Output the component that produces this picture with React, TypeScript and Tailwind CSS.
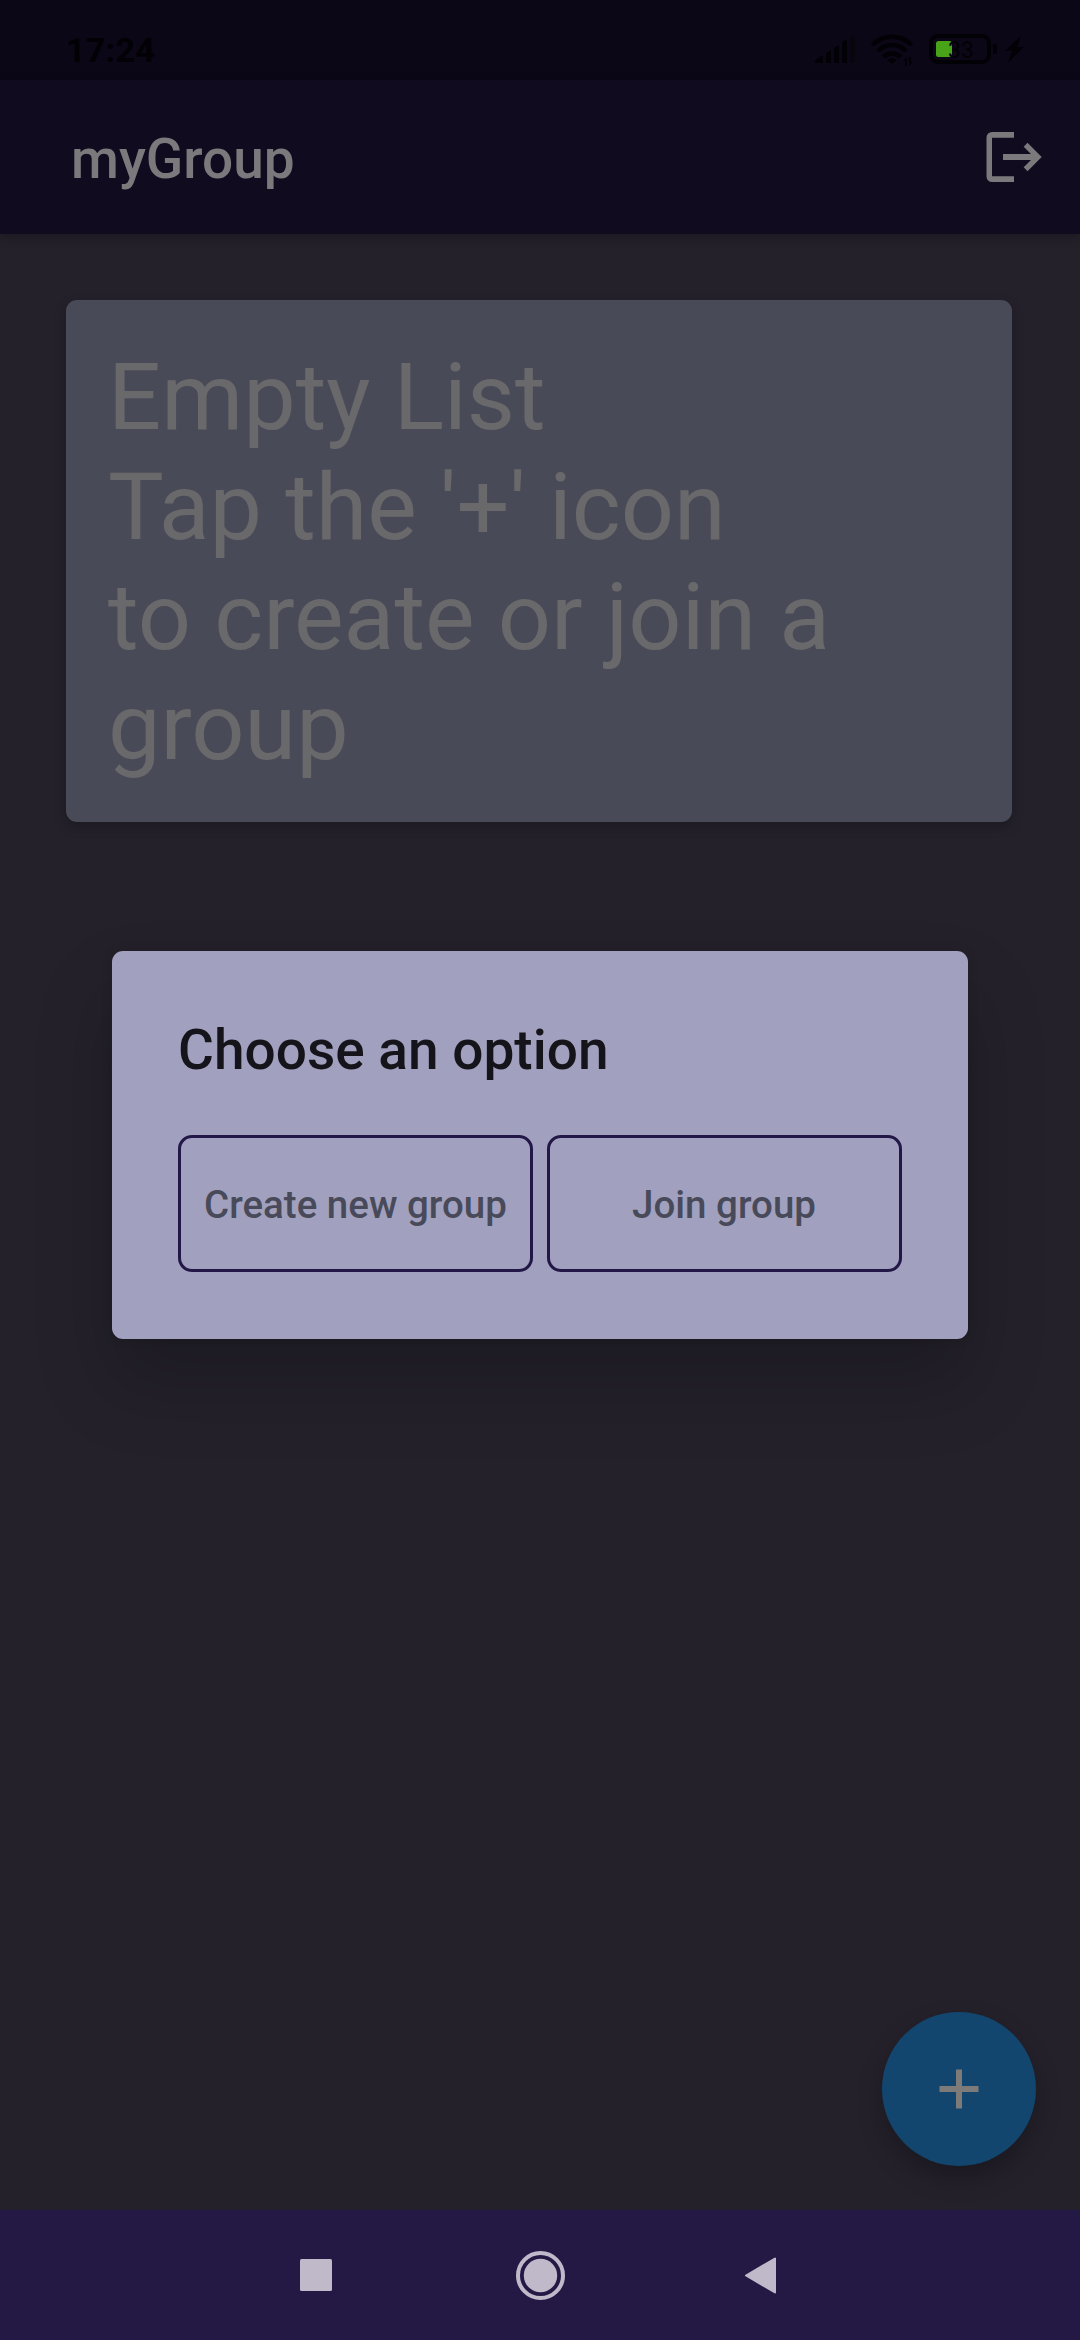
import React from "react";

function StatusIcons() {
  return (
    <svg className="h-20 w-[230px]" viewBox="810 0 230 80">
      <g fill="#020105">
        <path d="M815 63v-2.500l8-5.500v8zM826 63V53l5-3v13zM834 63V48l5-3v18zM842 63V42l5-3v24z" />
        <path d="M850 63V37l5-2v28z" fill="#08050f" />
        <path d="M892 64l-4.500-4a7 7 0 0 1 9 0z" />
      </g>
      <g fill="none" stroke="#020105" strokeWidth="4.500">
        <path d="M872.500 45a27 27 0 0 1 39 0" />
        <path d="M878 51a19.500 19.500 0 0 1 28 0" />
        <path d="M883.500 57a12 12 0 0 1 17 0" />
      </g>
      <path d="M903 61l4-4v9h-2v-5zM909 57v9l4-4h-2v-5z" fill="#020105" />
      <rect x="931" y="36" width="58" height="26" rx="7" fill="none" stroke="#020105" strokeWidth="4" />
      <path d="M993 44h1a3 3 0 0 1 3 3v4a3 3 0 0 1-3 3h-1z" fill="#020105" />
      <rect x="936" y="41" width="16" height="16" rx="2.500" fill="#49a319" />
      <text x="948" y="58" fontSize="23" fontFamily="Roboto" fill="#020105">33</text>
      <path d="M1021 36l-16 15h7l-4 12 16-16h-7z" fill="#020105" />
    </svg>
  );
}

function LogoutIcon() {
  return (
    <svg className="h-[52px] w-[58px]" viewBox="985 131 58 52" fill="#7b797c">
      <path d="M1014 132h-22a5.500 5.500 0 0 0-5.500 5.500v39a5.500 5.500 0 0 0 5.500 5.500h22v-5.750h-22v-38.500h22z" />
      <path d="M1003 154v6h28l-7.300 7.300 3.800 3.900 14.200-14.200-14.200-14.200-3.800 3.900 7.300 7.300z" />
    </svg>
  );
}

function OptionButton({ children }: { children: React.ReactNode }) {
  return (
    <button className="flex h-[137px] w-[355px] items-center justify-center rounded-[14px] border-3 border-[#221747] pt-0.5 text-[38.5px] font-medium text-[#494a59]">
      {children}
    </button>
  );
}

export default function App() {
  return (
    <div className="relative flex h-[2340px] w-[1080px] flex-col overflow-hidden bg-[#24212b] font-['Roboto',sans-serif]">
      <div className="flex h-20 shrink-0 items-center justify-between bg-[#0b0716] pr-10 pl-[66px]">
        <span className="pt-5 text-[34px] leading-none font-bold tracking-[0.3px] text-[#020105]">17:24</span>
        <StatusIcons />
      </div>
      <header className="flex h-[154px] shrink-0 items-center justify-between bg-[#100b1f] pr-[37px] pl-[71px] shadow-[0_4px_10px_rgba(0,0,0,0.25)]">
        <h1 className="pt-1 text-[55px] leading-none font-medium text-[#7b797c]">myGroup</h1>
        <LogoutIcon />
      </header>

      <main className="flex flex-1 flex-col px-[66px] pt-[66px]">
        <section className="h-[522px] w-[946px] rounded-[11px] bg-[#494a57] px-[42px] pt-[42px] shadow-[0_5px_12px_rgba(0,0,0,0.25)]">
          <p className="text-[93.5px] leading-[110px] text-[#69686b]">
            Empty List<br />Tap the '+' icon<br />to create or join a<br />group
          </p>
        </section>
      </main>

      <button className="absolute top-[2012px] left-[882px] flex h-[154px] w-[154px] items-center justify-center rounded-full bg-[#12466f] shadow-[0_12px_24px_rgba(0,0,0,0.28)]">
        <svg className="h-10 w-10" viewBox="0 0 40 40" stroke="#7c7b7a" strokeWidth="6">
          <path d="M20 .5v39M.5 20h39" />
        </svg>
      </button>

      <div role="dialog" className="absolute top-[951px] left-[112px] h-[387.500px] w-[855.500px] rounded-[11px] bg-[#a1a1bf] px-[66px] pt-[67px] shadow-[0_44px_76px_rgba(0,0,0,0.22),0_0_12px_rgba(0,0,0,0.12)]">
        <h2 className="text-[55px] leading-[64px] font-medium text-[#15141a]">Choose an option</h2>
        <div className="mt-[53px] flex justify-between">
          <OptionButton>Create new group</OptionButton>
          <OptionButton>Join group</OptionButton>
        </div>
      </div>

      <nav className="flex h-[130px] shrink-0 bg-[#241945]">
        <svg className="h-[130px] w-full" viewBox="0 0 1080 130" fill="#bfb9ca">
          <rect x="300" y="49" width="32" height="32" rx="1.500" />
          <circle cx="540.500" cy="65.500" r="16.700" />
          <circle cx="540.500" cy="65.500" r="22.500" fill="none" stroke="#bfb9ca" strokeWidth="4" />
          <path d="M746 65.500L775 48.500V82.500z" stroke="#bfb9ca" strokeWidth="2" strokeLinejoin="round" />
        </svg>
      </nav>
    </div>
  );
}
